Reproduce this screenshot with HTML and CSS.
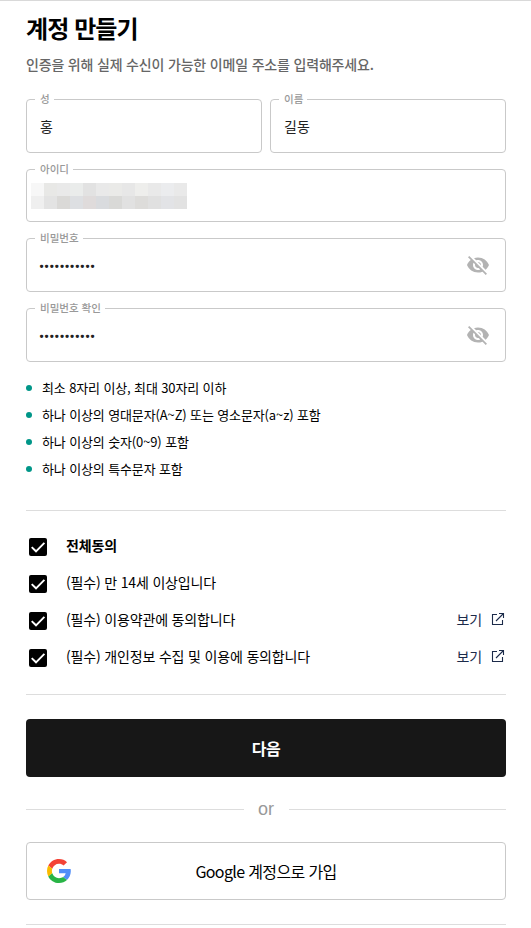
FILE: index.html
```html
<!DOCTYPE html>
<html lang="ko">
<head>
    <meta charset="utf-8">
    <meta name="viewport" content="width=device-width, initial-scale=1">
    <title>계정 만들기</title>
    <link rel="stylesheet" href="styles.css">
</head>
<body>

<svg class="sprite" xmlns="http://www.w3.org/2000/svg">
    <symbol id="eye-off" viewBox="0 0 24 24">
        <path fill="currentColor" d="M12 7c2.76 0 5 2.24 5 5 0 .65-.13 1.26-.36 1.83l2.92 2.92c1.51-1.26 2.7-2.89 3.43-4.75-1.73-4.39-6-7.5-11-7.5-1.4 0-2.74.25-3.98.7l2.16 2.16C10.74 7.13 11.35 7 12 7zM2 4.27l2.28 2.28.46.46C3.08 8.3 1.78 10.02 1 12c1.73 4.39 6 7.5 11 7.5 1.55 0 3.03-.3 4.38-.84l.42.42L19.73 22 21 20.73 3.27 3 2 4.27zM7.53 9.8l1.55 1.55c-.05.21-.08.43-.08.65 0 1.66 1.34 3 3 3 .22 0 .44-.03.65-.08l1.55 1.55c-.67.33-1.41.53-2.2.53-2.76 0-5-2.24-5-5 0-.79.2-1.53.53-2.2zm4.31-.78l3.15 3.15.02-.16c0-1.66-1.34-3-3-3l-.17.01z"/>
    </symbol>
    <symbol id="checked" viewBox="0 0 18 18">
        <rect width="18" height="18" rx="2" fill="#000"/>
        <path d="M2.7 9.1L7 13.3L15.4 4.9" fill="none" stroke="#fff" stroke-width="1.9"/>
    </symbol>
    <symbol id="open" viewBox="0 0 14 14">
        <path d="M6 2.5H1.5V12.5H11.5V8M8 1.5H12.5V6M12.5 1.5L5 9" fill="none" stroke="currentColor" stroke-width="1.1"/>
    </symbol>
</svg>

<form class="signup" method="post">
    <h1 class="title">계정 만들기</h1>
    <p class="subtitle">인증을 위해 실제 수신이 가능한 이메일 주소를 입력해주세요.</p>

    <div class="fields">
        <div class="name-row">
            <fieldset class="field">
                <legend>성</legend>
                <input type="text" value="홍">
            </fieldset>
            <fieldset class="field">
                <legend>이름</legend>
                <input type="text" value="길동">
            </fieldset>
        </div>
        <fieldset class="field field-id">
            <legend>아이디</legend>
            <div class="mosaic">
                <i class="c1"></i><i class="c2"></i><i class="c3"></i><i class="c4"></i><i class="c5"></i><i class="c6"></i><i class="c7"></i><i class="c8"></i><i class="c9"></i><i class="c10"></i><i class="c11"></i><i class="c12"></i>
                <i class="c13"></i><i class="c14"></i><i class="c15"></i><i class="c16"></i><i class="c17"></i><i class="c18"></i><i class="c19"></i><i class="c20"></i><i class="c21"></i><i class="c22"></i><i class="c23"></i><i class="c24"></i>
            </div>
        </fieldset>
        <fieldset class="field">
            <legend>비밀번호</legend>
            <input type="password" value="abcdefg123!">
            <svg class="eye"><use href="#eye-off"/></svg>
        </fieldset>
        <fieldset class="field">
            <legend>비밀번호 확인</legend>
            <input type="password" value="abcdefg123!">
            <svg class="eye"><use href="#eye-off"/></svg>
        </fieldset>
    </div>

    <ul class="rules">
        <li>최소 8자리 이상, 최대 30자리 이하</li>
        <li>하나 이상의 영대문자(A~Z) 또는 영소문자(a~z) 포함</li>
        <li>하나 이상의 숫자(0~9) 포함</li>
        <li>하나 이상의 특수문자 포함</li>
    </ul>

    <div class="agree">
        <div class="agree-row">
            <svg class="check"><use href="#checked"/></svg>
            <b>전체동의</b>
        </div>
        <div class="agree-row">
            <svg class="check"><use href="#checked"/></svg>
            <span>(필수) 만 14세 이상입니다</span>
        </div>
        <div class="agree-row">
            <svg class="check"><use href="#checked"/></svg>
            <span>(필수) 이용약관에 동의합니다</span>
            <a class="view">보기 <svg class="open"><use href="#open"/></svg></a>
        </div>
        <div class="agree-row">
            <svg class="check"><use href="#checked"/></svg>
            <span>(필수) 개인정보 수집 및 이용에 동의합니다</span>
            <a class="view">보기 <svg class="open"><use href="#open"/></svg></a>
        </div>
    </div>

    <button class="btn next" type="submit">다음</button>
    <div class="or">or</div>
    <button class="btn google" type="button">
        <svg class="google-logo" viewBox="0 0 48 48">
            <path fill="#f44336" d="M24 9.5c3.54 0 6.71 1.22 9.21 3.6l6.85-6.85C35.9 2.38 30.47 0 24 0 14.62 0 6.51 5.38 2.56 13.22l7.98 6.19C12.43 13.72 17.74 9.5 24 9.5z"/>
            <path fill="#518ef8" d="M47.6 24.55c0-1.57-.15-3.09-.38-4.55H24v8.5h13.4c-.58 2.96-2.72 6-5.24 7.7l7.73 6c4.51-4.18 7.71-10.36 7.71-17.65z"/>
            <path fill="#fbbb00" d="M10.53 28.59c-.48-1.45-.76-2.99-.76-4.59s.27-3.14.76-4.59l-7.98-6.19C.92 16.46 0 20.12 0 24c0 3.88.92 7.54 2.56 10.78l7.97-6.19z"/>
            <path fill="#28b446" d="M24 48c6.48 0 11.93-2.13 15.89-5.81l-7.73-6c-2.15 1.45-4.92 2.3-8.16 2.3-6.26 0-11.57-4.22-13.47-9.91l-7.98 6.19C6.51 42.62 14.62 48 24 48z"/>
        </svg>
        <span>Google 계정으로 가입</span>
    </button>
    <hr class="bottom-line">
</form>

</body>
</html>
```
FILE: styles.css
```css
* {
    box-sizing: border-box;
}

body {
    margin: 0;
    height: 928px;
    overflow: hidden;
    border-top: 1px solid #d9d9d9;
    background-color: #fff;
    color: #000;
    font-family: "Noto Sans CJK KR", sans-serif;
}

.sprite {
    display: none;
}

.signup {
    padding: 9px 25px 0 26px;
}

.title {
    margin: 0;
    font-size: 24px;
    letter-spacing: -0.9px;
    line-height: 36px;
}

.subtitle {
    margin: 8px 0 0;
    color: #666;
    font-size: 14px;
    font-weight: 500;
    letter-spacing: -0.18px;
    line-height: 20px;
}

.fields {
    display: flex;
    flex-direction: column;
    gap: 9px;
    margin-top: 18px;
}

.name-row {
    display: grid;
    grid-template-columns: 1fr 1fr;
    gap: 8px;
}

.field {
    position: relative;
    width: 100%;
    min-width: 0;
    height: 61px;
    margin: 0;
    padding: 0 8px;
    border: 1px solid #c9c9c9;
    border-radius: 4px;
}

.field-id {
    height: 60px;
}

.field legend {
    height: 15px;
    padding: 0 4px 0 5px;
    color: #999;
    font-size: 10.5px;
    font-weight: 500;
    line-height: 13px;
}

.field input {
    display: block;
    width: 85%;
    height: 38px;
    padding: 0 5px;
    border: none;
    outline: none;
    background: none;
    color: #222;
    font-family: inherit;
    font-size: 14px;
}

.field input[type=password] {
    height: 41px;
    padding-left: 4px;
    font-family: Roboto, sans-serif;
    font-size: 14.6px;
    font-weight: 500;
}

.eye {
    position: absolute;
    top: 7px;
    right: 15px;
    width: 24px;
    height: 24px;
    color: #b3b3b3;
}

.mosaic {
    display: grid;
    grid-template-columns: repeat(12, 13px);
    grid-auto-rows: 13px;
    margin: 6px 0 0 -4px;
}

.c1 { background: #f7f7f7; }
.c2 { background: #e8e8e6; }
.c3 { background: #e9e9e9; }
.c4 { background: #eaeceb; }
.c5 { background: #e2e2e2; }
.c6 { background: #e9e9e9; }
.c7 { background: #eaeae8; }
.c8 { background: #e7e7e7; }
.c9 { background: #eeeeec; }
.c10 { background: #e9e9e9; }
.c11 { background: #ebecee; }
.c12 { background: #e9e9e9; }
.c13 { background: #efefef; }
.c14 { background: #e3e3e3; }
.c15 { background: #dad9d7; }
.c16 { background: #dddfe2; }
.c17 { background: #dfdbdb; }
.c18 { background: #d9dbde; }
.c19 { background: #d9d9d7; }
.c20 { background: #e1e1e1; }
.c21 { background: #dddcda; }
.c22 { background: #e0e0e0; }
.c23 { background: #e2e3e6; }
.c24 { background: #e2e2e2; }

.rules {
    margin: 12px 0 0;
    padding: 0;
    list-style: none;
    font-size: 13px;
    letter-spacing: -0.13px;
    line-height: 27px;
}

.rules li {
    display: flex;
    align-items: center;
}

.rules li::before {
    content: "";
    width: 6px;
    height: 6px;
    margin-right: 10px;
    border-radius: 50%;
    background-color: #009688;
}

.agree {
    height: 185px;
    margin-top: 28px;
    padding-top: 15px;
    border-top: 1px solid #ddd;
    border-bottom: 1px solid #ddd;
    font-size: 14px;
    letter-spacing: -0.17px;
}

.agree-row {
    display: flex;
    align-items: center;
    height: 37px;
    padding-left: 3px;
    line-height: 20px;
}

.check {
    width: 18px;
    height: 18px;
    margin: 4px 19px 0 0;
}

.view {
    display: flex;
    align-items: center;
    gap: 9px;
    margin-left: auto;
    padding-right: 1px;
    color: #1c2b4a;
}

.open {
    width: 14px;
    height: 14px;
}

.btn {
    display: flex;
    align-items: center;
    justify-content: center;
    width: 100%;
    height: 58px;
    border-radius: 4px;
    font-family: inherit;
    cursor: pointer;
}

.next {
    margin-top: 24px;
    border: none;
    background-color: #171717;
    color: #fff;
    font-size: 16px;
    font-weight: bold;
    letter-spacing: -0.5px;
}

.or {
    display: flex;
    align-items: center;
    gap: 14.5px;
    height: 65px;
    color: #999;
    font-family: "Liberation Sans", Arial, sans-serif;
    font-size: 18px;
}

.or::before, .or::after {
    content: "";
    flex: 1;
    height: 1px;
    background-color: #ddd;
}

.google {
    position: relative;
    border: 1px solid #c9c9c9;
    background-color: #fff;
    color: #000;
    font-size: 16px;
    letter-spacing: -0.64px;
}

.google-logo {
    position: absolute;
    left: 20px;
    width: 24px;
    height: 24px;
}

.bottom-line {
    height: 1px;
    margin: 24px 0 0;
    border: none;
    background-color: #ddd;
}
```
